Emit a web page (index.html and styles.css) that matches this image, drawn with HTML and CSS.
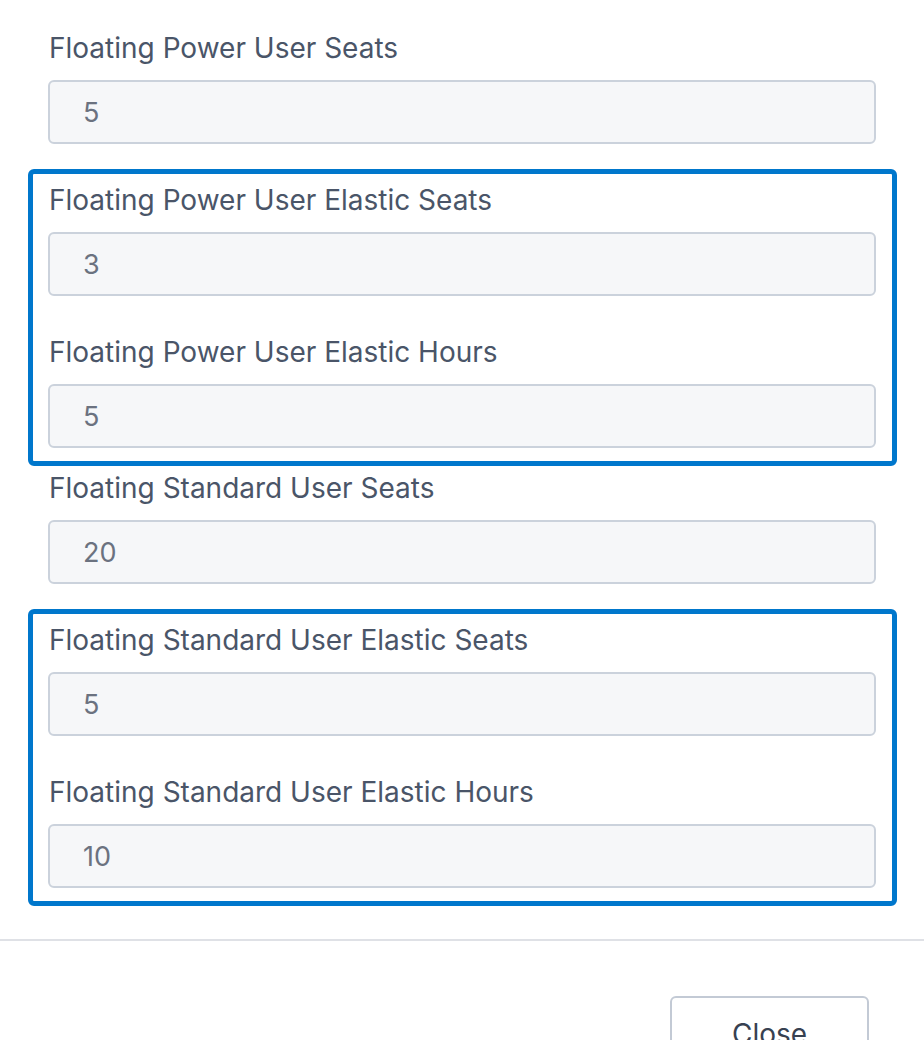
FILE: index.html
```html
<!DOCTYPE html>
<html lang="en">
<head>
    <meta charset="UTF-8">
    <meta name="viewport" content="width=device-width, initial-scale=1.0">
    <title>License Seats</title>

    <link rel="stylesheet" href="styles.css">
</head>
<body>
    <div class="modal-body">
        <div class="form-group">
            <label for="powerSeats">Floating Power User Seats</label>
            <input type="text" id="powerSeats" value="5" readonly>
        </div>

        <!-- Power user elastic -->
        <div class="elastic-box">
            <div class="form-group">
                <label for="powerElasticSeats">Floating Power User Elastic Seats</label>
                <input type="text" id="powerElasticSeats" value="3" readonly>
            </div>
            <div class="form-group">
                <label for="powerElasticHours">Floating Power User Elastic Hours</label>
                <input type="text" id="powerElasticHours" value="5" readonly>
            </div>
        </div>

        <div class="form-group">
            <label for="standardSeats">Floating Standard User Seats</label>
            <input type="text" id="standardSeats" value="20" readonly>
        </div>

        <!-- Standard user elastic -->
        <div class="elastic-box">
            <div class="form-group">
                <label for="standardElasticSeats">Floating Standard User Elastic Seats</label>
                <input type="text" id="standardElasticSeats" value="5" readonly>
            </div>
            <div class="form-group">
                <label for="standardElasticHours">Floating Standard User Elastic Hours</label>
                <input type="text" id="standardElasticHours" value="10" readonly>
            </div>
        </div>
    </div>

    <div class="modal-footer">
        <button type="button" class="button">Close</button>
    </div>
</body>
</html>
```

FILE: styles.css
```css
body {
    font-family: Inter, 'Noto Sans', sans-serif;
    background-color: white;
    color: #4a5568;
    margin: 0;
    padding: 0;
    overflow: hidden;
}
.modal-body {
    padding: 30px 48px 29px 48px;
}
.form-group {
    display: flex;
    flex-direction: column;
}
.form-group label {
    font-size: 28px;
    line-height: 36px;
    margin-bottom: 14px;
    padding-left: 1px;
}
.form-group input {
    font-family: Inter, 'Noto Sans', sans-serif;
    font-size: 27px;
    color: #6b7280;
    height: 64px;
    box-sizing: border-box;
    padding: 0 0 0 33px;
    border: 2px solid #cbd2dc;
    border-radius: 6px;
    background-color: #f6f7f9;
    outline: none;
}
.modal-body > .form-group {
    margin-bottom: 25px;
}
/* Elastic section */
.elastic-box {
    margin: 0 -21px 4px -20px;
    padding: 8px 16px 13px 15px;
    border: 5px solid #0077cc;
    border-radius: 6px;
    display: flex;
    flex-direction: column;
    gap: 38px;
}
.modal-footer {
    border-top: 2px solid #dfe1e6;
    padding: 55px 55px 0 0;
    display: flex;
    justify-content: flex-end;
}
.button {
    font-family: Inter, 'Noto Sans', sans-serif;
    font-size: 28px;
    color: #374151;
    background-color: white;
    border: 2px solid #c3cad5;
    border-radius: 6px;
    width: 199px;
    height: 76px;
    cursor: pointer;
}
```
